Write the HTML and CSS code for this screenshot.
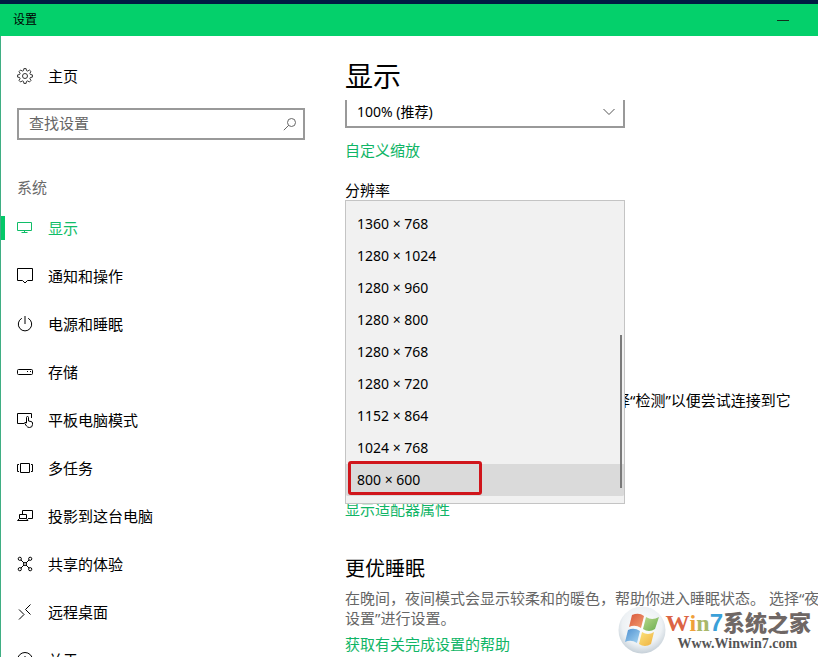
FILE: index.html
```html
<!DOCTYPE html>
<html lang="zh-CN">
<head>
<meta charset="utf-8">
<title>设置</title>
<link rel="stylesheet" href="styles.css">
</head>
<body>
<header class="titlebar">
  <span>设置</span>
  <button class="minimize" aria-label="最小化"></button>
</header>
<div class="window">
  <aside class="sidebar">
    <a class="nav-item home" href="#home">
      <svg class="icon" viewBox="0 0 16 16"><path d="M6.9.6h2.2l.4 2 1.2.5L12.400 2 14 3.600l-1.100 1.700.5 1.200 2 .4v2.200l-2 .4-.5 1.200L14 12.400 12.400 14l-1.700-1.100-1.200.5-.4 2H6.900l-.4-2-1.200-.5L3.600 14 2 12.400l1.100-1.700-.5-1.200-2-.4V6.900l2-.4.5-1.200L2 3.600 3.600 2l1.700 1.100 1.200-.5z"/><circle cx="8" cy="8" r="2.500"/></svg>
      <span>主页</span>
    </a>
    <div class="search">
      <input type="text" placeholder="查找设置" aria-label="查找设置">
      <svg class="search-icon" viewBox="0 0 14 14"><circle cx="8.500" cy="5.500" r="4"/><path d="M5.700 8.300.8 13.200"/></svg>
    </div>
    <h2 class="group">系统</h2>
    <nav>
      <a class="nav-item active" href="#display">
        <svg class="icon" viewBox="0 0 16 16"><path d="M.5 2.500h14v8H.5zM7.500 10.500v2M4.500 12.500h6"/></svg>
        <span>显示</span>
      </a>
      <a class="nav-item" href="#notifications">
        <svg class="icon" viewBox="0 0 16 16"><path d="M.5.5h15v12h-5L8 15l-2.500-2.500h-5z"/></svg>
        <span>通知和操作</span>
      </a>
      <a class="nav-item" href="#power">
        <svg class="icon" viewBox="0 0 16 16"><path d="M8 0v8M4.800 2.300a6.700 6.700 0 1 0 6.400 0"/></svg>
        <span>电源和睡眠</span>
      </a>
      <a class="nav-item" href="#storage">
        <svg class="icon" viewBox="0 0 16 16"><rect x=".5" y="5.500" width="15" height="5" rx="1"/><path d="M10 7.500h1M13 7.500h1"/></svg>
        <span>存储</span>
      </a>
      <a class="nav-item" href="#tablet">
        <svg class="icon" viewBox="0 0 16 16"><path d="M7 11.500H.5v-10h14V6M9.500 11V5.500a1 1 0 0 1 2 0V9l2.500.5q1.500.3 1.500 1.500v1.500q0 3-3 3-2 0-3-1.500l-2-3q0-1.500 2 0"/></svg>
        <span>平板电脑模式</span>
      </a>
      <a class="nav-item" href="#multitask">
        <svg class="icon" viewBox="0 0 16 16"><path d="M3.500 3.500h9v9h-9zM2 4.500H.5v7H2M14 4.500h1.500v7H14"/></svg>
        <span>多任务</span>
      </a>
      <a class="nav-item" href="#projecting">
        <svg class="icon" viewBox="0 0 16 16"><path d="M5.500 6V2.500h10v8H11M2.500 6.500h7v4h-7zM2.500 10.500l-2 2h10.500l-1.500-2"/></svg>
        <span>投影到这台电脑</span>
      </a>
      <a class="nav-item" href="#shared">
        <svg class="icon" viewBox="0 0 16 16"><circle cx="2.800" cy="2.800" r="1.600"/><circle cx="13.200" cy="2.800" r="1.600"/><circle cx="2.800" cy="13.200" r="1.600"/><circle cx="13.200" cy="13.200" r="1.600"/><circle cx="8" cy="8" r="1.500"/><path d="M4 4l3 3M12 4 9 7M4 12l3-3M12 12 9 9"/></svg>
        <span>共享的体验</span>
      </a>
      <a class="nav-item" href="#remote">
        <svg class="icon" viewBox="0 0 16 16"><path d="M13.500.5 8.500 5.500l5 5M2 5.500l5 5-5 5"/></svg>
        <span>远程桌面</span>
      </a>
      <a class="nav-item" href="#about">
        <svg class="icon" viewBox="0 0 16 16"><circle cx="8" cy="8" r="7.500"/><path d="M8 4v1M8 7v5"/></svg>
        <span>关于</span>
      </a>
    </nav>
  </aside>
  <main class="content">
    <h1>显示</h1>
    <div class="scroll-area">
      <div class="scale">
        <select aria-label="缩放"><option>100% (推荐)</option></select>
        <svg class="chevron" viewBox="0 0 12 8"><path d="M.5 1 6 6.500 11.500 1"/></svg>
      </div>
      <a class="link custom" href="#scaling">自定义缩放</a>
      <div class="resolution">
        <label for="resolution">分辨率</label>
        <div class="popup">
          <select id="resolution" size="9">
            <option>1360 × 768</option>
            <option>1280 × 1024</option>
            <option>1280 × 960</option>
            <option>1280 × 800</option>
            <option>1280 × 768</option>
            <option>1280 × 720</option>
            <option>1152 × 864</option>
            <option>1024 × 768</option>
            <option selected>800 × 600</option>
          </select>
          <span class="thumb"></span>
          <span class="marker"></span>
        </div>
      </div>
      <p class="detect">较旧的显示器可能不会始终自动连接。选择“检测”以便尝试连接到它</p>
      <a class="link adapter" href="#adapter">显示适配器属性</a>
      <h3>更优睡眠</h3>
      <p class="hint">在晚间，夜间模式会显示较柔和的暖色，帮助你进入睡眠状态。 选择“夜<br>设置”进行设置。</p>
      <a class="link" href="#help">获取有关完成设置的帮助</a>
    </div>
  </main>
</div>
<div class="watermark">
  <svg class="orb" viewBox="0 0 48 48">
    <defs>
      <radialGradient id="glass" cx=".5" cy=".4" r=".6"><stop offset="0" stop-color="#fff"/><stop offset=".7" stop-color="#edf1f4"/><stop offset="1" stop-color="#c6d0d8"/></radialGradient>
      <linearGradient id="red" x2="1" y2="1"><stop stop-color="#d8553a"/><stop offset="1" stop-color="#f3a073"/></linearGradient>
      <linearGradient id="green" x2="1" y2="1"><stop stop-color="#b9d98a"/><stop offset="1" stop-color="#6aac50"/></linearGradient>
      <linearGradient id="blue" x2="1" y2="1"><stop stop-color="#4d8fd0"/><stop offset="1" stop-color="#a5d5f2"/></linearGradient>
      <linearGradient id="yellow" x2="1" y2="1"><stop stop-color="#fbe37b"/><stop offset="1" stop-color="#efb040"/></linearGradient>
    </defs>
    <circle cx="24" cy="24" r="23.500" fill="url(#glass)"/>
    <path fill="url(#red)" d="M14 9q7-3 12 1l-3 12q-6-4-12-1z"/>
    <path fill="url(#green)" d="M28 11q6 4 13 0l-4 12q-6 4-12 0z"/>
    <path fill="url(#blue)" d="M10 24q6-3 12 1l-3 12q-6-4-12-1z"/>
    <path fill="url(#yellow)" d="M24 26q6 4 12 0l-3 12q-6 4-12 0z"/>
  </svg>
  <div class="brand">
    <div class="brand-name"><span class="w">W</span><span class="in">i</span><span class="n">n</span><span class="seven">7</span><span class="cn">系统之家</span></div>
    <div class="brand-url">Www.Winwin7.com</div>
  </div>
</div>
</body>
</html>
```
FILE: styles.css
```css
* { box-sizing: border-box; }
body {
  margin: 0;
  height: 100vh;
  overflow: hidden;
  display: flex;
  flex-direction: column;
  position: relative;
  background: #fff;
  color: #000;
  font: 15px/20px "Noto Sans", "Noto Sans CJK SC", sans-serif;
}
h1, h2, h3, p { margin: 0; font-weight: 400; }
a { color: inherit; text-decoration: none; }
svg { fill: none; stroke: currentColor; display: block; flex: none; }
.titlebar {
  flex: none;
  height: 36px;
  border-top: 4px solid #001b42;
  background: #04d06b;
  display: flex;
  align-items: center;
  justify-content: space-between;
  padding: 0 29px 0 13px;
  font-size: 12px;
}
.minimize {
  width: 12px;
  height: 1px;
  padding: 0;
  border: 0;
  background: #10301c;
}
.window {
  flex: 1;
  min-height: 0;
  display: flex;
  border-left: 1px solid #3fae83;
}
.sidebar { flex: none; width: 304px; overflow: hidden; }
.nav-item {
  height: 48px;
  display: flex;
  align-items: center;
  gap: 15px;
  padding-left: 16px;
  position: relative;
}
.icon { width: 16px; height: 16px; }
.home { margin-top: 16px; }
.home .icon { stroke: #333; }
.search { position: relative; margin: 8px 0 0 16px; }
.search input {
  display: block;
  width: 100%;
  height: 32px;
  border: 2px solid #999;
  padding: 0 36px 2px 10px;
  font: inherit;
  background: #fff;
}
.search input::placeholder { color: #666; }
.search-icon {
  position: absolute;
  right: 8px;
  top: 9px;
  width: 14px;
  height: 14px;
  color: #666;
}
.group {
  margin: 37px 0 7px 16px;
  font-size: 15px;
  color: #6a6a6a;
}
.nav-item.active { color: #10bd68; }
.nav-item.active::before {
  content: "";
  position: absolute;
  left: 0;
  top: 12px;
  width: 4px;
  height: 24px;
  background: #04c868;
}
.content {
  flex: 1;
  min-width: 0;
  margin-left: 40px;
  display: flex;
  flex-direction: column;
  overflow: hidden;
}
h1 {
  font-size: 28px;
  line-height: 40px;
  margin: 20px 0 4px;
}
.scroll-area { flex: 1; min-height: 0; overflow: hidden; white-space: nowrap; }
.scale { position: relative; width: 280px; margin-top: -4px; }
.scale select {
  appearance: none;
  display: block;
  width: 100%;
  height: 32px;
  border: 2px solid #999;
  border-radius: 0;
  padding: 0 10px;
  background: #fff;
  color: #000;
  font: inherit;
  font-size: 14px;
}
.chevron {
  position: absolute;
  right: 10px;
  top: 12px;
  width: 12px;
  height: 8px;
  color: #555;
}
.link { display: block; width: max-content; color: #10b566; }
.custom { margin-top: 12px; }
.resolution { position: relative; margin-top: 20px; height: 20px; }
.resolution label { display: block; }
.popup {
  position: absolute;
  left: 0;
  top: 20px;
  width: 280px;
  padding: 7px 0;
  border: 1px solid #c4c4c4;
  background: #f1f1f1;
}
.popup select {
  appearance: none;
  display: block;
  width: 100%;
  height: 288px;
  border: 0;
  outline: 0;
  padding: 0;
  overflow: hidden;
  background: transparent;
  font: inherit;
  font-size: 14px;
}
.popup option {
  height: 32px;
  min-height: 32px;
  padding: 6px 11px 0;
  color: #000;
}
.popup option:checked { background: #dadada linear-gradient(#dadada, #dadada); color: #000; }
.thumb {
  position: absolute;
  right: 2px;
  top: 134px;
  width: 2px;
  height: 153px;
  background: #7a7a7a;
}
.marker {
  position: absolute;
  left: 2px;
  bottom: 8px;
  width: 134px;
  height: 34px;
  border: 3px solid #d0151b;
  border-radius: 3px;
}
.detect { margin-top: 190px; }
.adapter { margin-top: 89px; }
h3 {
  margin-top: 36px;
  font-size: 20px;
  line-height: 28px;
}
.hint { margin-top: 5px; color: #666; }
.hint + .link { margin-top: 6px; }
.watermark {
  position: absolute;
  right: 7px;
  bottom: 3px;
  display: flex;
  align-items: center;
}
.orb { width: 48px; height: 48px; stroke: none; }
.brand { display: flex; flex-direction: column; white-space: nowrap; }
.brand-name {
  display: flex;
  align-items: baseline;
  height: 27px;
  font: 700 24px/27px "Liberation Serif", serif;
}
.w { color: #dc6444; }
.in { color: #efa03a; }
.n { color: #a9b86a; }
.seven { color: #3ba0d8; font-family: "Liberation Sans", sans-serif; }
.cn { color: #6f6765; font: 900 22px/27px "Noto Sans CJK SC", sans-serif; }
.brand-url {
  padding-left: 12px;
  font: 700 14px/18px "Liberation Serif", serif;
  color: #555;
}
```
